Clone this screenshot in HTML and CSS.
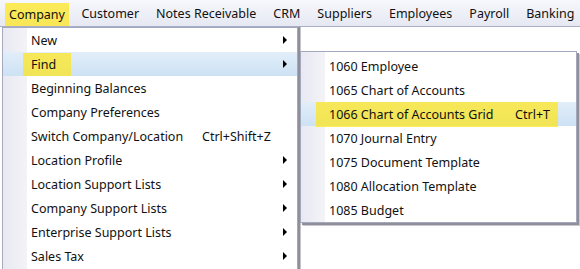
FILE: index.html
```html
<!DOCTYPE html>
<html lang="en">

<head>
    <meta charset="UTF-8">
    <title>Company menu</title>
    <link rel="stylesheet" href="styles.css">
</head>

<body>
    <div class="menubar">
        <span class="top-item active"><span class="mark">Company</span></span>
        <span class="top-item">Customer</span>
        <span class="top-item">Notes Receivable</span>
        <span class="top-item">CRM</span>
        <span class="top-item">Suppliers</span>
        <span class="top-item">Employees</span>
        <span class="top-item">Payroll</span>
        <span class="top-item">Banking</span>
    </div>

    <div class="workspace">
        <!-- main dropdown -->
        <ul class="menu main-menu">
            <li class="item sub">New</li>
            <li class="item sub hover"><span class="mark find-mark">Find</span></li>
            <li class="item">Beginning Balances</li>
            <li class="item">Company Preferences</li>
            <li class="item"><span class="label">Switch Company/Location</span><span class="key">Ctrl+Shift+Z</span></li>
            <li class="item sub">Location Profile</li>
            <li class="item sub">Location Support Lists</li>
            <li class="item sub">Company Support Lists</li>
            <li class="item sub">Enterprise Support Lists</li>
            <li class="item sub">Sales Tax</li>
        </ul>

        <!-- Find submenu -->
        <ul class="menu find-menu">
            <li class="item">1060 Employee</li>
            <li class="item">1065 Chart of Accounts</li>
            <li class="item hover"><span class="mark grid-mark"><span class="label">1066 Chart of Accounts Grid</span><span class="key">Ctrl+T</span></span></li>
            <li class="item">1070 Journal Entry</li>
            <li class="item">1075 Document Template</li>
            <li class="item">1080 Allocation Template</li>
            <li class="item">1085 Budget</li>
        </ul>
    </div>
</body>

</html>
```

FILE: styles.css
```css
body {
    margin: 0;
    font-family: "Noto Sans", "Open Sans", sans-serif;
    font-size: 12.5px;
    color: #111;
    background: #fff;
    width: 580px;
    height: 269px;
    overflow: hidden;
}

/* top menu bar */
.menubar {
    display: flex;
    height: 26px;
    padding-left: 4px;
    background: linear-gradient(#f7f8fc, #e6e8f2);
    border-bottom: 1px solid #a9aec8;
}
.top-item {
    display: flex;
    align-items: center;
    padding: 0 8.5px;
    white-space: nowrap;
}
.top-item.active {
    padding: 3px 4px 0 1px;
    align-items: stretch;
}
.top-item.active .mark {
    display: flex;
    align-items: center;
    padding: 0 4px 0 4px;
}

.mark {
    background: rgba(255, 230, 20, 0.7);
}

.workspace {
    position: relative;
    height: 242px;
    background: #fff;
}

/* popups */
.menu {
    position: absolute;
    margin: 0;
    padding: 0;
    list-style: none;
    background: #fff linear-gradient(90deg, #e8e9f2, #f3f3f7) no-repeat;
    background-size: 24px 100%;
    border: 1px solid #a5a9c0;
}
.main-menu {
    top: 0;
    left: 2px;
    width: 294px;
    height: 250px;
    box-shadow: 2px 0 0 #8e8f98, 3px 0 0 #c5c6cc;
}
.find-menu {
    top: 24px;
    left: 300px;
    width: 275px;
    padding-top: 2px;
    box-shadow: 2px 2px 0 #8e8f98, 3px 3px 0 #c8c9cf;
}

.item {
    position: relative;
    display: flex;
    align-items: center;
    height: 24px;
    padding-left: 28px;
    white-space: nowrap;
}
.item.hover {
    background: linear-gradient(#e2eef9, #cde2f4);
}
.main-menu .item .label {
    width: 171px;
}

.find-mark {
    display: flex;
    align-items: center;
    height: 23px;
    margin-left: -8px;
    padding: 0 15px 0 8px;
}
.grid-mark {
    display: flex;
    align-items: center;
    height: 25px;
    margin-left: -13px;
    padding: 0 8px 0 13px;
    width: 221px;
}
.grid-mark .key {
    margin-left: auto;
}

/* submenu arrow */
.item.sub::after {
    content: "";
    position: absolute;
    right: 10px;
    top: 8px;
    border-style: solid;
    border-width: 4px 0 4px 4px;
    border-color: transparent transparent transparent #000;
}
```
